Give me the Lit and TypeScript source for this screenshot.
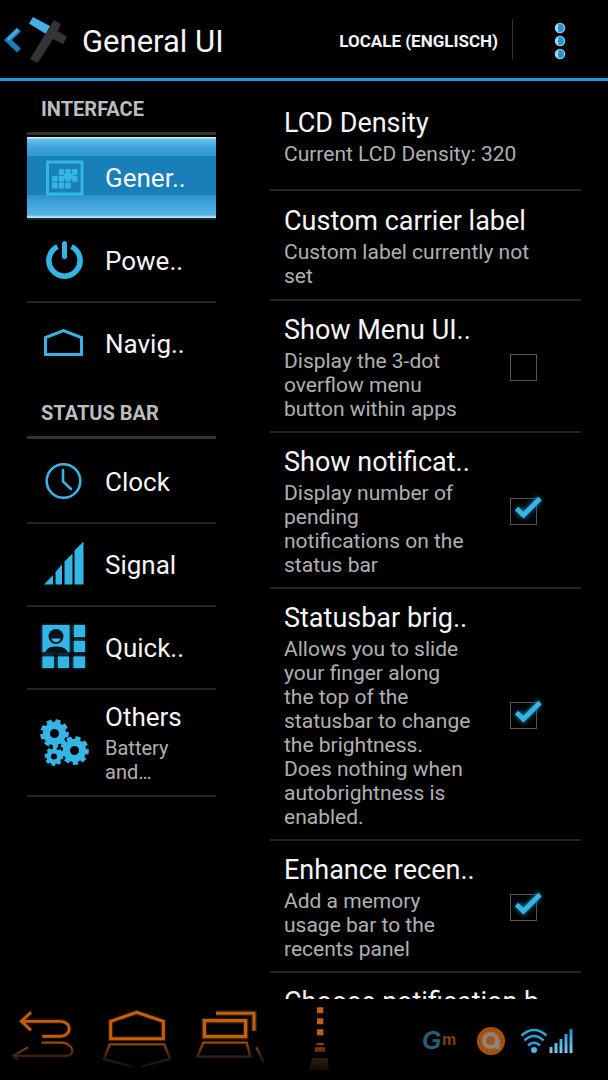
import { LitElement, html, css, svg, nothing } from "lit";
import { customElement, property } from "lit/decorators.js";

const gear = (cx: number, cy: number, r: number, hole: number, teeth: number) => {
  const points: string[] = [];
  const step = (Math.PI * 2) / teeth;
  for (let i = 0; i < teeth; i++) {
    const a = i * step + 0.1;
    for (const [offset, radius] of [[-0.34, 0.8], [-0.26, 1], [0.26, 1], [0.34, 0.8]]) {
      const t = a + offset * step;
      points.push(`${(cx + Math.cos(t) * r * radius).toFixed(1)} ${(cy + Math.sin(t) * r * radius).toFixed(1)}`);
    }
  }
  return svg`<path fill-rule="evenodd" d="M${points.join("L")}Z M${cx - hole} ${cy}a${hole} ${hole} 0 1 0 ${hole * 2} 0a${hole} ${hole} 0 1 0 ${-hole * 2} 0Z"/>`;
};

const tile = (x: number, y: number) => svg`<rect x=${x} y=${y} width="5.6" height="6" rx="1.2"/>`;

const icons: Record<string, unknown> = {
  general: svg`
    <rect x="7.5" y="9" width="34.500" height="32" fill="none" stroke="#33b5e5" stroke-width="3"/>
    ${tile(18.7, 16)}${tile(25.3, 16)}${tile(32, 16)}
    ${tile(12, 22.7)}${tile(18.7, 22.7)}${tile(25.3, 22.7)}${tile(32, 22.7)}
    ${tile(12, 29.4)}${tile(18.7, 29.4)}${tile(25.3, 29.4)}
    <path d="M24 21h9v5h-9z"/>`,
  power: svg`
    <path d="M17.500 10.600a15.600 15.600 0 1 0 14 0" fill="none" stroke="#33b5e5" stroke-width="5.500"/>
    <path d="M24.500 7.500v13" stroke="#33b5e5" stroke-width="5" stroke-linecap="round"/>`,
  navigation: svg`<path d="M5.500 35.500V18.500L23.500 11.500L41.500 18.500V35.500Z" fill="none" stroke="#33b5e5" stroke-width="3"/>`,
  clock: svg`
    <circle cx="23.500" cy="24" r="16.800" fill="none" stroke="#33b5e5" stroke-width="2.600"/>
    <path d="M23 13v11.500l8 7.500" fill="none" stroke="#33b5e5" stroke-width="2.600" stroke-linecap="round"/>`,
  signal: svg`<path d="M4 44.500L13 35V44.500ZM15.500 44.500V32L22 24.500V44.500ZM24.500 44.500V21.500L32.500 13.500V44.500ZM34.500 44.500V10.500L43.500 1.500V44.500Z"/>`,
  quick: svg`
    <g filter="url(#soft)" opacity=".6"><path d="M2 2h28v28H2zM33 2h12v12H33zM33 17h12v12H33zM2 33h12v12H2zM17 33h12v12H17zM33 33h12v12H33z"/></g>
    <path d="M2.500 2h27v27H2.500zM34 2h11v12H34zM34 18h11v11H34zM2.500 33.500h11.500v11.500H2.500zM18 33.500h11v11.500H18zM33.500 33.500H45v11.500H33.500z"/>
    <circle cx="16" cy="13.500" r="7.500" fill="#04121a"/>
    <path d="M5 30C7 24 12 23.500 16 23.500S26 24 28 30Z" fill="#04121a"/>
    <path d="M11.500 15.500h9c-1 5-8 5-9 0Z"/>`,
  others: svg`${gear(14.5, 15.5, 14.5, 4.5, 9)}${gear(34.5, 32.5, 14.5, 4.5, 9)}${gear(14, 38.5, 9.5, 3, 8)}`,
};

interface Category { icon: string; title: string; summary?: string; selected?: boolean }
interface Preference { id: string; title: string; summary: string; checked?: boolean }

const sections: { heading: string; items: Category[] }[] = [
  {
    heading: "INTERFACE",
    items: [
      { icon: "general", title: "Gener..", selected: true },
      { icon: "power", title: "Powe.." },
      { icon: "navigation", title: "Navig.." },
    ],
  },
  {
    heading: "STATUS BAR",
    items: [
      { icon: "clock", title: "Clock" },
      { icon: "signal", title: "Signal" },
      { icon: "quick", title: "Quick.." },
      { icon: "others", title: "Others", summary: "Battery and…" },
    ],
  },
];

const preferences: Preference[] = [
  { id: "density", title: "LCD Density", summary: "Current LCD Density: 320" },
  { id: "carrier", title: "Custom carrier label", summary: "Custom label currently not set" },
  { id: "menu", title: "Show Menu UI..", summary: "Display the 3-dot overflow menu button within apps", checked: false },
  { id: "count", title: "Show notificat..", summary: "Display number of pending notifications on the status bar", checked: true },
  {
    id: "brightness",
    title: "Statusbar brig..",
    summary: "Allows you to slide your finger along the top of the statusbar to change the brightness. Does nothing when autobrightness is enabled.",
    checked: true,
  },
  { id: "recents", title: "Enhance recen..", summary: "Add a memory usage bar to the recents panel", checked: true },
  { id: "behaviour", title: "Choose notification b..", summary: "" },
];

@customElement("category-list")
class CategoryList extends LitElement {
  static styles = css`
    :host { display: block; min-width: 0; }
    .heading {
      margin: 0;
      padding: 17px 14px 11px;
      border-bottom: 3px solid #333;
      font-size: 20px;
      line-height: 24px;
      font-weight: 700;
      color: #bdbdbd;
    }
    .heading.first { padding-top: 16px; }
    .list { list-style: none; margin: 0; padding: 2px 0 0; }
    .entry + .entry { border-top: 2px solid #242424; }
    .entry.last { border-bottom: 2px solid #242424; }
    .item {
      display: flex;
      align-items: center;
      gap: 16px;
      width: 100%;
      min-height: 81px;
      padding: 11px 4px 11px 13px;
      border: 0;
      background: none;
      color: #f5f5f5;
      font: inherit;
      text-align: left;
    }
    .item.selected {
      background: linear-gradient(#c5ebfb 0 1px, #6cc2ea 2px, #3fa5d8 10px, #2d98d0 19px, #187fb8 19px, #187fb8 58px, #2b93cc 58px, #55b5e4 78px, #b5e6fa 80px);
    }
    .icon { flex: none; width: 49px; height: 49px; fill: #33b5e5; overflow: visible; }
    .text { display: block; min-width: 0; }
    .title { display: block; font-size: 26px; line-height: 32px; }
    .summary { display: block; margin-top: 3px; font-size: 20px; line-height: 24px; color: #b0b0b0; }
  `;

  render() {
    return html`
      <nav aria-label="Categories">
        ${sections.map((section, s) => html`
          <h2 class="heading ${s === 0 ? "first" : ""}">${section.heading}</h2>
          <ul class="list">
            ${section.items.map((item, i) => html`
              <li class="entry ${s === sections.length - 1 && i === section.items.length - 1 ? "last" : ""}">
                <button class="item ${item.selected ? "selected" : ""}" type="button">
                  <svg class="icon" viewBox="0 0 49 49" aria-hidden="true">
                    <defs><filter id="soft" x="-20%" y="-20%" width="140%" height="140%"><feGaussianBlur stdDeviation="1.500"/></filter></defs>
                    ${icons[item.icon]}
                  </svg>
                  <span class="text">
                    <span class="title">${item.title}</span>
                    ${item.summary ? html`<span class="summary">${item.summary}</span>` : nothing}
                  </span>
                </button>
              </li>`)}
          </ul>`)}
      </nav>`;
  }
}

@customElement("preference-row")
class PreferenceRow extends LitElement {
  @property({ attribute: false }) pref!: Preference;

  static styles = css`
    :host { display: block; border-bottom: 2px solid #242424; }
    .row {
      box-sizing: border-box;
      display: flex;
      align-items: center;
      width: 100%;
      min-height: 108px;
      padding: 13px 0 10px 14px;
      border: 0;
      background: none;
      color: #f5f5f5;
      font: inherit;
      text-align: left;
    }
    .row.plain { padding-right: 30px; }
    .row.bare { align-items: flex-start; }
    .text { display: block; flex: 1; min-width: 0; }
    .title { display: block; font-size: 27px; line-height: 32px; white-space: nowrap; }
    .summary { display: block; margin-top: 3px; font-size: 21px; line-height: 24px; color: #b0b0b0; }
    .widget { position: relative; flex: none; width: 27px; height: 27px; margin: 0 44px 0 36px; }
    .box {
      appearance: none;
      display: block;
      box-sizing: border-box;
      width: 27px;
      height: 27px;
      margin: 0;
      border: 1px solid #555;
      background: #000;
    }
    .tick { position: absolute; left: 0; top: -6px; width: 40px; height: 32px; pointer-events: none; overflow: visible; }
  `;

  render() {
    const { id, title, summary, checked } = this.pref;
    const text = html`
      <span class="text">
        <span class="title">${title}</span>
        ${summary ? html`<span class="summary">${summary}</span>` : nothing}
      </span>`;
    if (checked === undefined) return html`<button class="row plain ${summary ? "" : "bare"}" type="button">${text}</button>`;
    return html`
      <label class="row" for=${id}>
        ${text}
        <span class="widget">
          <input class="box" type="checkbox" id=${id} .checked=${checked}>
          ${checked ? html`
            <svg class="tick" viewBox="0 0 40 32" aria-hidden="true">
              <defs>
                <filter id="glow" x="-40%" y="-40%" width="180%" height="180%"><feGaussianBlur stdDeviation="2.500"/></filter>
              </defs>
              <path d="M6.500 16.500l7 6.500L30 6.500" fill="none" stroke="#0d5f86" stroke-width="7" filter="url(#glow)"/>
              <path d="M6.500 16.500l7 6.500L30 6.500" fill="none" stroke="#33b5e5" stroke-width="5"/>
            </svg>` : nothing}
        </span>
      </label>`;
  }
}

@customElement("system-bar")
class SystemBar extends LitElement {
  static styles = css`
    :host { display: flex; align-items: center; justify-content: space-between; height: 81px; padding: 0 34px 0 10px; background: #000; }
    .keys { display: flex; align-items: center; gap: 22px; }
    .key { display: block; padding: 0; border: 0; background: none; }
    .glyph { display: block; width: 70px; height: 64px; fill: none; stroke: #c65f08; overflow: visible; }
    .status { display: flex; align-items: center; gap: 14px; padding-top: 3px; }
    .badge { display: block; height: 32px; overflow: visible; }
    .google { width: 40px; }
    .app { width: 30px; }
    .radio { width: 54px; }
    .letter { font-family: "Liberation Sans", Arial, sans-serif; font-weight: 700; }
  `;

  render() {
    const fade = svg`<defs><linearGradient id="fade" gradientUnits="userSpaceOnUse" x1="0" y1="150" x2="0" y2="238"><stop offset="0" stop-color="#a85008"/><stop offset=".35" stop-color="#6b3306"/><stop offset=".6" stop-color="#2c1d12"/><stop offset="1" stop-color="#120d0a"/></linearGradient></defs>`;
    return html`
      <div class="keys">
        <button class="key" type="button" aria-label="Back">
          <svg class="glyph" viewBox="30 54 210 192">${fade}
            <path d="M64 94H180C218 94 216 139 180 139H127M93 67L64 94L93 121" stroke="#2a1505" stroke-width="15"/>
            <path d="M64 94H180C218 94 216 139 180 139H127M93 67L64 94L93 121" stroke-width="8"/>
            <path d="M124 158H185C218 158 232 198 195 198H42M84 172L40 197L53 210" stroke="url(#fade)" stroke-width="7"/>
          </svg>
        </button>
        <button class="key" type="button" aria-label="Home">
          <svg class="glyph" viewBox="306 54 210 192">${fade}
            <path d="M332 146V94L410 67L490 94V146Z" stroke="#2a1505" stroke-width="16"/>
            <path d="M332 146V94L410 67L490 94V146Z" stroke-width="9"/>
            <path d="M395 230L312 207L329 163H493L510 207L425 230" stroke="url(#fade)" stroke-width="7"/>
          </svg>
        </button>
        <button class="key" type="button" aria-label="Recent apps">
          <svg class="glyph" viewBox="42 54 210 192">${fade}
            <path d="M73 92H197V140H73ZM108 70H222V122" stroke="#2a1808" stroke-width="18"/>
            <path d="M73 92H197V140H73Z" stroke-width="10"/>
            <path d="M108 70H222V122" stroke-width="9"/>
            <path d="M70 158H200L211 200H52ZM229 172L250 216" stroke="url(#fade)" stroke-width="7"/>
          </svg>
        </button>
        <button class="key" type="button" aria-label="Menu">
          <svg class="glyph" viewBox="318 54 210 192">${fade}
            <path d="M411 52h19v18h-19zM411 85h19v18h-19zM411 118h19v18h-19z" fill="#c65f08" stroke="none"/>
            <path d="M410 159h21l1 6h-23zM406 172h28l3 13h-35zM396 204h47l4 36h-59z" fill="url(#fade)" stroke="none"/>
          </svg>
        </button>
      </div>
      <div class="status">
        <svg class="badge google" viewBox="0 0 40 32" role="img" aria-label="Gm">
          <text class="letter" x="0" y="24" font-size="25" font-style="italic" fill="#235e77">G</text>
          <text class="letter" x="20" y="20" font-size="16" fill="#85420f">m</text>
        </svg>
        <svg class="badge app" viewBox="0 0 30 32" role="img" aria-label="App notification">
          <circle cx="15" cy="16" r="14" fill="#a9520c"/>
          <circle cx="15" cy="16" r="11.500" fill="none" stroke="#7c3c0a" stroke-dasharray="1 2"/>
          <circle cx="14.500" cy="15.500" r="6.500" fill="none" stroke="#8a8480" stroke-width="4"/>
          <path d="M21.500 15v9" stroke="#8a8480" stroke-width="4.500"/>
        </svg>
        <svg class="badge radio" viewBox="0 0 54 32" role="img" aria-label="Wi-Fi and mobile signal">
          <defs><linearGradient id="sky" x1="0" y1="0" x2="0" y2="1"><stop offset="0" stop-color="#168fd0"/><stop offset="1" stop-color="#7ccdf2"/></linearGradient></defs>
          <g fill="none" stroke="#2ba3df" stroke-width="2.500">
            <path d="M1.500 10.500Q14 -.5 26.500 10.500"/><path d="M4.500 15.500Q14 6.500 23.500 15.500"/><path d="M8 20.500Q14 15 20 20.500"/>
          </g>
          <circle cx="14" cy="25" r="3" fill="#4db8ea"/>
          <path d="M29.500 22h3v6h-3zM34.500 18h3v10h-3zM39.500 14h3v14h-3zM44.500 9h3v19h-3zM49.500 4h3v24h-3z" fill="url(#sky)"/>
        </svg>
      </div>`;
  }
}

@customElement("app-root")
class AppRoot extends LitElement {
  static styles = css`
    :host {
      display: flex;
      flex-direction: column;
      height: 100vh;
      background: #000;
      color: #f5f5f5;
      font-family: Roboto, "Noto Sans", sans-serif;
      overflow: hidden;
    }
    .bar {
      flex: none;
      display: flex;
      align-items: center;
      box-sizing: border-box;
      height: 81px;
      padding: 0 36px 0 0;
      border-bottom: 3px solid #1d9be6;
    }
    .up { display: flex; align-items: center; gap: 12px; margin-right: auto; padding: 2px 0 0; border: 0; background: none; color: inherit; font: inherit; }
    .logo { flex: none; width: 70px; height: 60px; }
    .name { margin: 0; padding-top: 4px; font-size: 31px; line-height: 36px; font-weight: 400; white-space: nowrap; }
    .locale { padding: 4px 14px 0 0; border: 0; background: none; color: #f5f5f5; font: inherit; font-size: 17px; line-height: 20px; font-weight: 700; white-space: nowrap; }
    .split { width: 1px; height: 41px; margin-right: 35px; background: #333; }
    .more { padding: 4px 0 0; border: 0; background: none; }
    .dots { display: block; width: 24px; height: 44px; }
    .panes { flex: 1; min-height: 0; display: grid; grid-template-columns: 189fr 311fr; gap: 54px; padding: 0 27px; overflow: hidden; }
    .prefs { min-width: 0; overflow: hidden; }
    .foot { flex: none; }
  `;

  render() {
    return html`
      <header class="bar">
        <button class="up" type="button" aria-label="Navigate up">
          <svg class="logo" viewBox="0 0 70 60" aria-hidden="true">
            <path d="M19 19.500L8 30L19 40.500" fill="none" stroke="#1b7fb8" stroke-width="5.500"/>
            <path d="M18 19.500L8 29.500" fill="none" stroke="#43aee4" stroke-width="3"/>
            <path d="M33 7L50 16L46 24L29 13.500Z" fill="#43b0e2"/>
            <path d="M54 10L61 14L57.500 21L67 27L63 34L53 29L37.500 53L30 49Z" fill="#343434"/>
          </svg>
          <h1 class="name">General UI</h1>
        </button>
        <button class="locale" type="button">LOCALE (ENGLISCH)</button>
        <span class="split"></span>
        <button class="more" type="button" aria-label="More options">
          <svg class="dots" viewBox="0 0 24 44" aria-hidden="true">
            ${[9, 22, 35].map((y) => svg`
              <circle cx="12" cy=${y} r="4.600" fill="#1397e2" stroke="#b5bcc0" stroke-width="1.400"/>
              <path d=${`M10 ${y - 3}q-2.500 3 0 6`} fill="none" stroke="#a9dcf6" stroke-width="2"/>`)}
          </svg>
        </button>
      </header>
      <main class="panes">
        <category-list></category-list>
        <section class="prefs" aria-label="General UI">
          ${preferences.map((pref) => html`<preference-row .pref=${pref}></preference-row>`)}
        </section>
      </main>
      <system-bar class="foot"></system-bar>`;
  }
}
